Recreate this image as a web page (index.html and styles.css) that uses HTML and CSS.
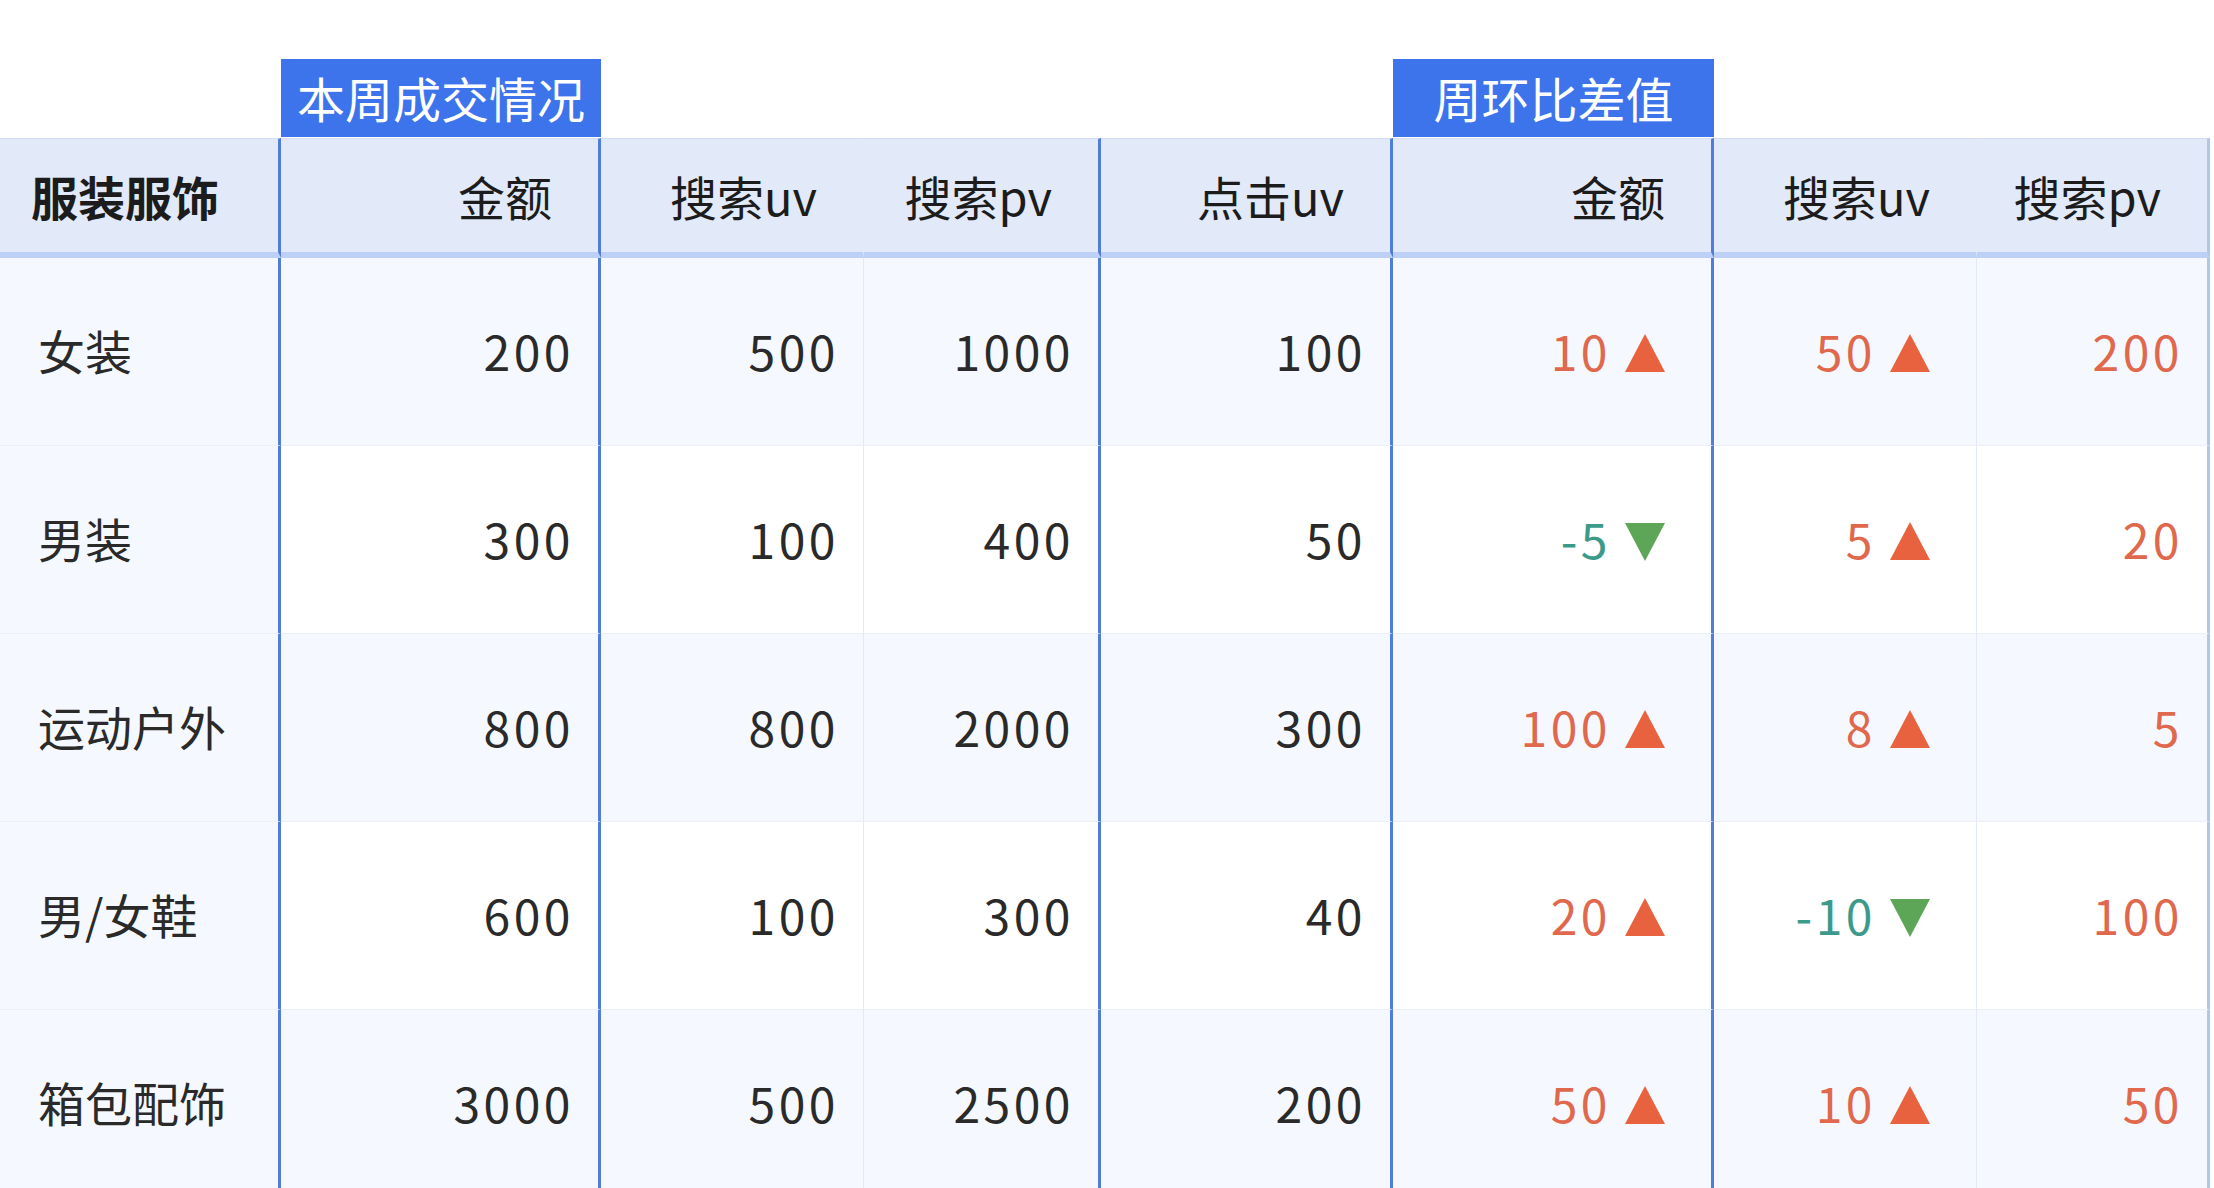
FILE: index.html
```html
<!DOCTYPE html>
<html lang="zh-CN">
<head>
<meta charset="utf-8">
<title>服装服饰</title>
<link rel="stylesheet" href="styles.css">
</head>
<body>
<div class="sheet">
  <div class="row tags">
    <div class="tcell"></div>
    <div class="tcell"><span class="tag">本周成交情况</span></div>
    <div class="tcell"></div>
    <div class="tcell"></div>
    <div class="tcell"></div>
    <div class="tcell"><span class="tag">周环比差值</span></div>
    <div class="tcell"></div>
    <div class="tcell"></div>
  </div>
  <div class="row head">
    <div class="cell rh corner b">服装服饰</div>
    <div class="cell hc b">金额</div>
    <div class="cell hc f">搜索uv</div>
    <div class="cell hc b">搜索pv</div>
    <div class="cell hc b">点击uv</div>
    <div class="cell hc b">金额</div>
    <div class="cell hc f">搜索uv</div>
    <div class="cell hc e">搜索pv</div>
  </div>
  <div class="row odd">
    <div class="cell rh b">女装</div>
    <div class="cell num b">200</div>
    <div class="cell num f">500</div>
    <div class="cell num b">1000</div>
    <div class="cell num b">100</div>
    <div class="cell num ar b"><span class="up">10</span><svg class="tri" viewBox="0 0 40 38"><polygon class="tri-up" points="20,0 40,38 0,38"/></svg></div>
    <div class="cell num ar f"><span class="up">50</span><svg class="tri" viewBox="0 0 40 38"><polygon class="tri-up" points="20,0 40,38 0,38"/></svg></div>
    <div class="cell num e"><span class="up">200</span></div>
  </div>
  <div class="row even">
    <div class="cell rh b">男装</div>
    <div class="cell num b">300</div>
    <div class="cell num f">100</div>
    <div class="cell num b">400</div>
    <div class="cell num b">50</div>
    <div class="cell num ar b"><span class="down">-5</span><svg class="tri dn" viewBox="0 0 40 38"><polygon class="tri-down" points="0,0 40,0 20,38"/></svg></div>
    <div class="cell num ar f"><span class="up">5</span><svg class="tri" viewBox="0 0 40 38"><polygon class="tri-up" points="20,0 40,38 0,38"/></svg></div>
    <div class="cell num e"><span class="up">20</span></div>
  </div>
  <div class="row odd">
    <div class="cell rh b">运动户外</div>
    <div class="cell num b">800</div>
    <div class="cell num f">800</div>
    <div class="cell num b">2000</div>
    <div class="cell num b">300</div>
    <div class="cell num ar b"><span class="up">100</span><svg class="tri" viewBox="0 0 40 38"><polygon class="tri-up" points="20,0 40,38 0,38"/></svg></div>
    <div class="cell num ar f"><span class="up">8</span><svg class="tri" viewBox="0 0 40 38"><polygon class="tri-up" points="20,0 40,38 0,38"/></svg></div>
    <div class="cell num e"><span class="up">5</span></div>
  </div>
  <div class="row even">
    <div class="cell rh b">男/女鞋</div>
    <div class="cell num b">600</div>
    <div class="cell num f">100</div>
    <div class="cell num b">300</div>
    <div class="cell num b">40</div>
    <div class="cell num ar b"><span class="up">20</span><svg class="tri" viewBox="0 0 40 38"><polygon class="tri-up" points="20,0 40,38 0,38"/></svg></div>
    <div class="cell num ar f"><span class="down">-10</span><svg class="tri dn" viewBox="0 0 40 38"><polygon class="tri-down" points="0,0 40,0 20,38"/></svg></div>
    <div class="cell num e"><span class="up">100</span></div>
  </div>
  <div class="row odd">
    <div class="cell rh b">箱包配饰</div>
    <div class="cell num b">3000</div>
    <div class="cell num f">500</div>
    <div class="cell num b">2500</div>
    <div class="cell num b">200</div>
    <div class="cell num ar b"><span class="up">50</span><svg class="tri" viewBox="0 0 40 38"><polygon class="tri-up" points="20,0 40,38 0,38"/></svg></div>
    <div class="cell num ar f"><span class="up">10</span><svg class="tri" viewBox="0 0 40 38"><polygon class="tri-up" points="20,0 40,38 0,38"/></svg></div>
    <div class="cell num e"><span class="up">50</span></div>
  </div>
</div>
</body>
</html>
```
FILE: styles.css
```css
* { box-sizing: border-box; }
html, body { margin: 0; padding: 0; background: #ffffff; }
body {
  font-family: "Noto Sans CJK SC", "Noto Sans", sans-serif;
  font-size: 47px;
  color: #2a2a2a;
  overflow: hidden;
}
.sheet {
  padding-top: 59px;
  width: 2214px;
}
.row {
  display: grid;
  grid-template-columns: 281px 320px 263px 237px 292px 321px 263px 233px;
}
.tags { height: 79px; }
.tcell { display: flex; }
.tag {
  flex: 1;
  height: 78px;
  background: #3d74ec;
  color: #ffffff;
  display: flex;
  align-items: center;
  justify-content: center;
  font-size: 48px;
  line-height: 1;
  padding-bottom: 2px;
}
.cell {
  display: flex;
  align-items: center;
  justify-content: flex-end;
  padding-right: 32px;
  border-right: 1px solid #e6ecf7;
  border-bottom: 1px solid #eaeff8;
  line-height: 1;
  white-space: nowrap;
}
.cell.b { border-right: 3px solid #4f7dd9; }
.cell.f { border-right: 1px solid #e3e9f6; }
.cell.e { border-right: 3px solid #b2c5ee; }
.head { height: 120px; }
.head .cell {
  background: #e2eafa;
  border-top: 1px solid #d3def5;
  border-bottom: 6px solid #bdd0f6;
  padding-top: 0;
  color: #1c1c1c;
}
.head .hc { padding-right: 46px; }
.odd, .even { height: 188px; }
.odd .cell { background: #f5f8fe; }
.even .cell { background: #ffffff; }
.odd .cell, .even .cell { padding-bottom: 4px; }
.cell.rh {
  justify-content: flex-start;
  padding-left: 38px;
  padding-right: 0;
  background: #f5f8fe;
}
.head .cell.rh {
  background: #e2eafa;
  padding-left: 31px;
}
.corner { font-weight: 700; }
.num {
  letter-spacing: 3.5px;
  font-size: 48px;
  padding-right: 24px;
}
.num.ar { padding-right: 46px; }
.up { color: #e0684c; }
.down { color: #3c9a8a; }
.tri {
  width: 40px;
  height: 40px;
  margin-left: 14px;
  margin-top: 6px;
}
.tri.dn { width: 40px; margin-top: 9px; }
.tri-up { fill: #e9623f; }
.tri-down { fill: #5ea657; }
```
